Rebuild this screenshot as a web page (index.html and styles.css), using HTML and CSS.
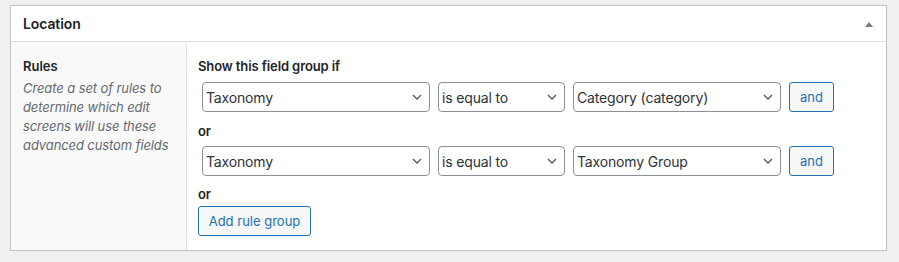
FILE: index.html
```html
<!DOCTYPE html>
<html lang="en">
<head>
  <meta charset="UTF-8">
  <title>Location</title>
  <link rel="stylesheet" href="styles.css">
</head>
<body>
  <div class="postbox">
    <div class="postbox-header">
      <h2>Location</h2>
      <span class="toggle">
        <svg width="8" height="5" viewBox="0 0 8 5"><path d="M0 5 L4 0 L8 5 Z" fill="#787c82"/></svg>
      </span>
    </div>

    <div class="field">
      <div class="field-label">
        <label>Rules</label>
        <p class="description">Create a set of rules to determine which edit screens will use these advanced custom fields</p>
      </div>

      <div class="field-input">
        <h4 class="first">Show this field group if</h4>
        <div class="rule-row">
          <div class="select w-param"><span>Taxonomy</span><svg class="chev" width="10" height="6" viewBox="0 0 10 6"><path d="M1 1 L5 5 L9 1" fill="none" stroke="#50575e" stroke-width="1.3"/></svg></div>
          <div class="select w-op"><span>is equal to</span><svg class="chev" width="10" height="6" viewBox="0 0 10 6"><path d="M1 1 L5 5 L9 1" fill="none" stroke="#50575e" stroke-width="1.3"/></svg></div>
          <div class="select w-value"><span>Category (category)</span><svg class="chev" width="10" height="6" viewBox="0 0 10 6"><path d="M1 1 L5 5 L9 1" fill="none" stroke="#50575e" stroke-width="1.3"/></svg></div>
          <button class="button">and</button>
        </div>

        <h4>or</h4>
        <div class="rule-row">
          <div class="select w-param"><span>Taxonomy</span><svg class="chev" width="10" height="6" viewBox="0 0 10 6"><path d="M1 1 L5 5 L9 1" fill="none" stroke="#50575e" stroke-width="1.3"/></svg></div>
          <div class="select w-op"><span>is equal to</span><svg class="chev" width="10" height="6" viewBox="0 0 10 6"><path d="M1 1 L5 5 L9 1" fill="none" stroke="#50575e" stroke-width="1.3"/></svg></div>
          <div class="select w-value"><span>Taxonomy Group</span><svg class="chev" width="10" height="6" viewBox="0 0 10 6"><path d="M1 1 L5 5 L9 1" fill="none" stroke="#50575e" stroke-width="1.3"/></svg></div>
          <button class="button">and</button>
        </div>

        <h4 class="last">or</h4>
        <button class="button add-group">Add rule group</button>
      </div>
    </div>
  </div>
</body>
</html>
```

FILE: styles.css
```css
body {
  margin: 0;
  padding: 5px 12px 0 10px;
  background: #f0f0f1;
  font-family: Inter, "Noto Sans", sans-serif;
  color: #1d2327;
}

.postbox {
  width: 875px;
  background: #fff;
  border: 1px solid #c3c4c7;
  box-shadow: 0 1px 1px rgba(0,0,0,0.04);
}

.postbox-header {
  display: flex;
  align-items: center;
  justify-content: space-between;
  height: 35px;
  border-bottom: 1px solid #dcdcde;
  padding: 0 13px 0 12px;
}

.postbox-header h2 {
  margin: 0;
  font-size: 14px;
  font-weight: 600;
  letter-spacing: -0.1px;
}

.toggle {
  display: flex;
  margin-top: 1px;
}

.field {
  display: flex;
}

.field-label {
  width: 151px;
  padding: 15px 12px;
  background: #f9f9f9;
  border-right: 1px solid #e1e1e1;
}

.field-label label {
  display: block;
  font-size: 13px;
  font-weight: 600;
  line-height: 18px;
}

.description {
  margin: 4px 0 0;
  font-size: 13px;
  font-style: italic;
  line-height: 19px;
  color: #646970;
  letter-spacing: -0.1px;
}

.field-input {
  flex: 1;
  padding: 15px 12px 14px 11px;
}

h4 {
  margin: 10px 0 6px;
  font-size: 13px;
  font-weight: 600;
  line-height: 18px;
  color: #1d2327;
  letter-spacing: -0.1px;
}

h4.first {
  margin: 0 0 7px;
}

h4.last {
  margin: 9px 0 3px;
}

.rule-row {
  display: flex;
  gap: 8px;
  margin-left: 4px;
}

.select {
  display: flex;
  align-items: center;
  justify-content: space-between;
  box-sizing: border-box;
  height: 30px;
  padding: 0 7px 0 3px;
  border: 1px solid #8c8f94;
  border-radius: 4px;
  font-size: 14px;
  color: #2c3338;
  letter-spacing: -0.15px;
}

.w-param { width: 228px; }
.w-op { width: 127px; }
.w-value { width: 208px; }

.button {
  display: block;
  box-sizing: border-box;
  height: 30px;
  width: 45px;
  padding: 0;
  border: 1px solid #2271b1;
  border-radius: 3px;
  background: #f6f7f7;
  color: #2271b1;
  font-family: inherit;
  font-size: 13px;
}

.add-group {
  width: 113px;
}
```
